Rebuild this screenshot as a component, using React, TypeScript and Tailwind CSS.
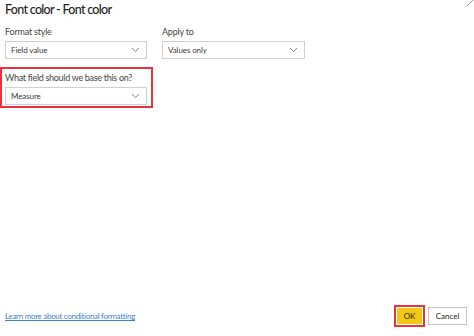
import React from "react";

const Chevron = () => (
  <svg width="9" height="6" viewBox="0 0 9 6" className="shrink-0">
    <path d="M1 1l3.5 3.5L8 1" fill="none" stroke="#8a8886" strokeWidth="1" />
  </svg>
);

const Select = ({ value }: { value: string }) => (
  <div className="flex h-[18px] items-center justify-between border border-[#d2d0ce] bg-white pl-[5px] pr-[6px] text-[8px] tracking-[-0.1px] text-[#3b3a39]">
    <span>{value}</span>
    <Chevron />
  </div>
);

export default function App() {
  return (
    <div
      className="relative flex h-[336px] w-[474px] flex-col bg-white px-[5px] text-[#252423]"
      style={{ fontFamily: 'Lato, "Open Sans", sans-serif' }}
    >
      {/* close / resize mark in the corner */}
      <svg width="6" height="6" viewBox="0 0 6 6" className="absolute right-[1px] top-0">
        <path d="M0 6L6 0" stroke="#9a9896" strokeWidth="1" />
      </svg>

      <h1 className="mt-[1px] text-[12.5px] leading-[18px] font-medium tracking-[-0.7px]">Font color - Font color</h1>

      <div className="mt-[6px] flex gap-[15px]">
        <div className="w-[142px]">
          <div className="mb-[3px] text-[9px] leading-[13px] tracking-[-0.2px] text-[#484644]">Format style</div>
          <Select value="Field value" />
        </div>
        <div className="w-[143px]">
          <div className="mb-[3px] text-[9px] leading-[13px] tracking-[-0.2px] text-[#484644]">Apply to</div>
          <Select value="Values only" />
        </div>
      </div>

      <div className="-ml-[5px] mt-[8px] w-[153px] border-2 border-[#e8323c] pb-[1px] pl-[3px] pr-[4px] pt-[2px]">
        <div className="mb-[3px] whitespace-nowrap text-[9px] leading-[13px] tracking-[-0.3px] text-[#484644]">
          What field should we base this on?
        </div>
        <Select value="Measure" />
      </div>

      <div className="mt-auto mb-[9px] flex items-center justify-between">
        <a className="text-[8px] tracking-[-0.3px] text-[#3c7fd1] underline">Learn more about conditional formatting</a>
        <div className="flex items-center gap-[3px] pr-[2px]">
          <div className="border-2 border-[#e8323c] p-[1px]">
            <button className="flex h-[16px] w-[25px] items-center justify-center bg-[#f2c811] text-[8px] text-[#252423]">
              OK
            </button>
          </div>
          <button className="flex h-[18px] w-[39px] items-center justify-center border border-[#c8c6c4] bg-white text-[8px] text-[#252423]">
            Cancel
          </button>
        </div>
      </div>
    </div>
  );
}
